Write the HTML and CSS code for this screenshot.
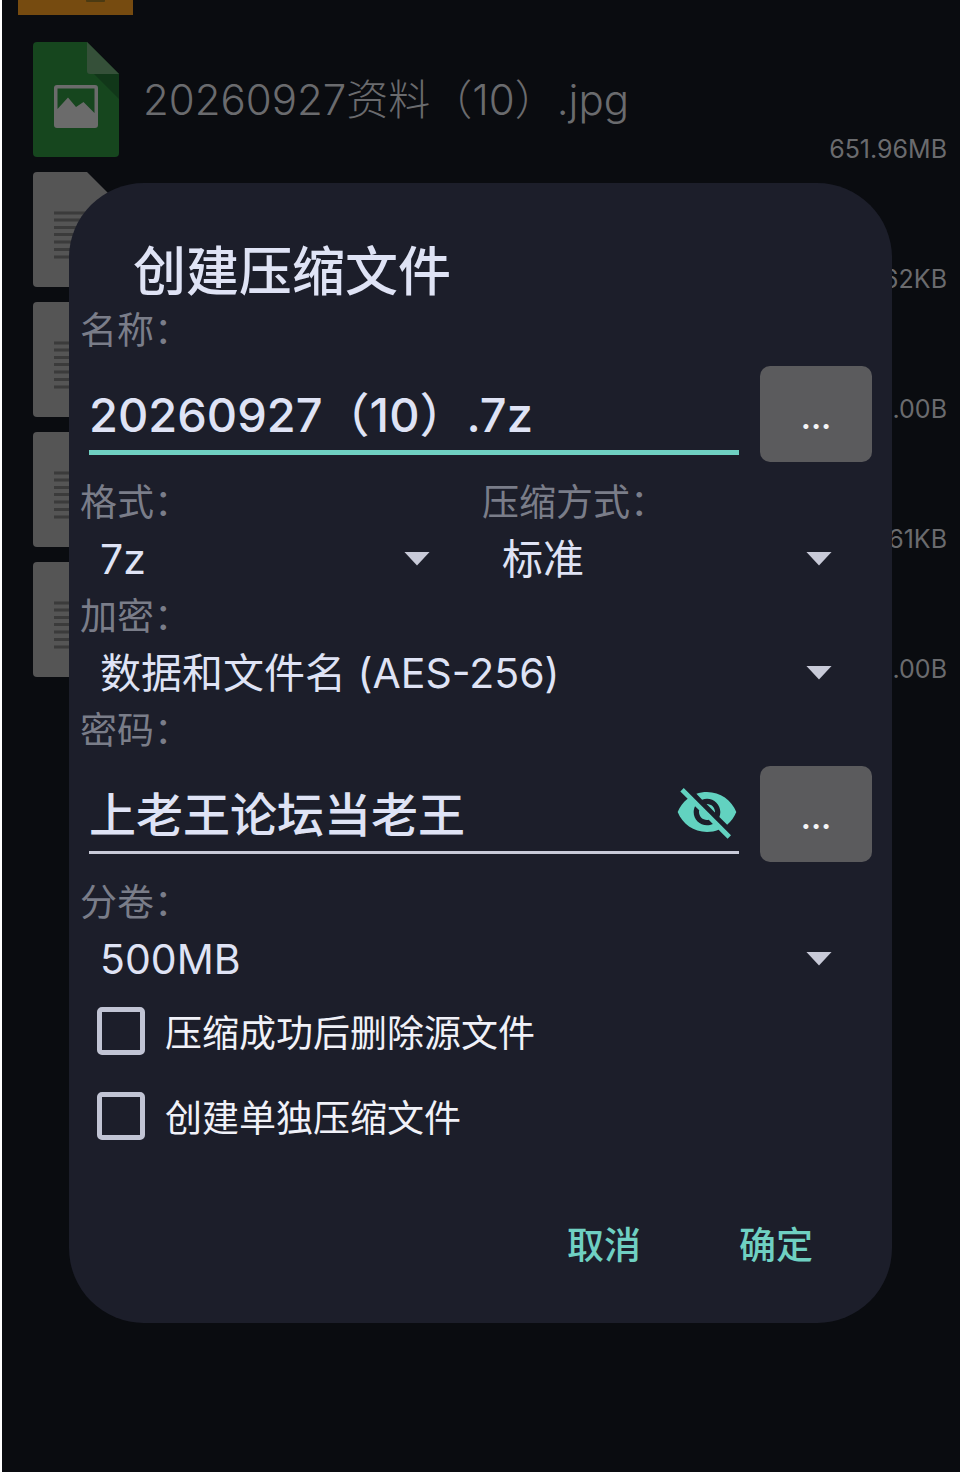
FILE: index.html
```
<!DOCTYPE html>
<html lang="zh-CN">
<head>
  <meta charset="utf-8">
  <meta name="viewport" content="width=device-width, initial-scale=1">
  <title>创建压缩文件</title>
  <link rel="stylesheet" href="styles.css">
</head>
<body>
  <!-- shared icons -->
  <svg class="sprite" width="0" height="0" aria-hidden="true">
    <symbol id="icon-doc" viewBox="0 0 86 115">
      <path fill="#555555" d="M4 0H54L86 32V111Q86 115 82 115H4Q0 115 0 111V4Q0 0 4 0Z"/>
      <path stroke="#3b3b3b" stroke-width="3" d="M21 41H65M21 48H65M21 55.500H65M21 62.500H65M21 70H65M21 77.500H65M21 85H50"/>
    </symbol>
  </svg>

  <div class="screen">
    <ul class="files">
      <li class="file file-cut">
        <svg class="folder-icon" viewBox="0 0 115 15" aria-hidden="true">
          <path fill="#764b10" d="M0 0H115V15H0Z"/>
          <path fill="#4b3a12" d="M68 0H87V1Q87 2 86 2H69Q68 2 68 1Z"/>
        </svg>
      </li>
      <li class="file">
        <svg class="file-icon" viewBox="0 0 86 115" aria-hidden="true">
          <path fill="#16461e" d="M4 0H54L86 32V111Q86 115 82 115H4Q0 115 0 111V4Q0 0 4 0Z"/>
          <path fill="#113719" d="M61 32H86V57Z"/>
          <path fill="#355039" d="M54 0L86 32H57Q54 32 54 29Z"/>
          <path fill="#6b6b6b" fill-rule="evenodd" d="M24 43H62Q65 43 65 46V83Q65 86 62 86H24Q21 86 21 83V46Q21 43 24 43ZM24.500 46.500V67L35 55.500L43 65L50.500 60L61.500 71V46.500Z"/>
        </svg>
        <span class="file-name">20260927资料（10）.jpg</span>
        <span class="file-size">651.96MB</span>
      </li>
      <li class="file">
        <svg class="file-icon" aria-hidden="true"><use href="#icon-doc"/></svg>
        <span class="file-size">62KB</span>
      </li>
      <li class="file">
        <svg class="file-icon" aria-hidden="true"><use href="#icon-doc"/></svg>
        <span class="file-size">.00B</span>
      </li>
      <li class="file">
        <svg class="file-icon" aria-hidden="true"><use href="#icon-doc"/></svg>
        <span class="file-size">61KB</span>
      </li>
      <li class="file">
        <svg class="file-icon" aria-hidden="true"><use href="#icon-doc"/></svg>
        <span class="file-size">.00B</span>
      </li>
    </ul>

    <form class="dialog" role="dialog" aria-labelledby="dialog-title">
      <h1 class="dialog-title" id="dialog-title">创建压缩文件</h1>

      <label class="label" for="name">名称：</label>
      <div class="input-row">
        <div class="input-wrap focused">
          <input class="input" type="text" id="name" value="20260927（10）.7z">
        </div>
        <button class="more" type="button" aria-label="浏览">...</button>
      </div>

      <div class="columns">
        <div class="column">
          <label class="label" for="format">格式：</label>
          <div class="select-wrap">
            <select class="select" id="format">
              <option>7z</option>
            </select>
          </div>
        </div>
        <div class="column">
          <label class="label" for="level">压缩方式：</label>
          <div class="select-wrap">
            <select class="select" id="level">
              <option>标准</option>
            </select>
          </div>
        </div>
      </div>

      <label class="label" for="encrypt">加密：</label>
      <div class="select-wrap">
        <select class="select" id="encrypt">
          <option>数据和文件名 (AES-256)</option>
        </select>
      </div>

      <label class="label" for="password">密码：</label>
      <div class="input-row">
        <div class="input-wrap">
          <input class="input" type="text" id="password" value="上老王论坛当老王">
          <button class="eye" type="button" aria-label="隐藏密码">
            <svg viewBox="0 0 24 24" aria-hidden="true">
              <path fill="currentColor" d="M12 7c2.760 0 5 2.240 5 5 0 .65-.13 1.260-.36 1.830l2.920 2.920c1.510-1.260 2.700-2.890 3.430-4.750-1.730-4.390-6-7.500-11-7.500-1.400 0-2.740.25-3.980.7l2.160 2.160C10.740 7.130 11.350 7 12 7zM2 4.270l2.280 2.280.46.46C3.080 8.300 1.780 10.020 1 12c1.730 4.390 6 7.500 11 7.500 1.550 0 3.030-.3 4.380-.84l.42.42L19.730 22 21 20.730 3.270 3 2 4.270zM7.530 9.800l1.550 1.550c-.05.21-.08.43-.08.65 0 1.660 1.340 3 3 3 .22 0 .44-.03.65-.08l1.550 1.550c-.67.33-1.410.53-2.200.53-2.760 0-5-2.240-5-5 0-.79.2-1.530.53-2.200zm4.310-.78l3.150 3.150.02-.16c0-1.660-1.340-3-3-3l-.17.010z"/>
            </svg>
          </button>
        </div>
        <button class="more" type="button" aria-label="选择密码">...</button>
      </div>

      <label class="label" for="volume">分卷：</label>
      <div class="select-wrap">
        <select class="select" id="volume">
          <option>500MB</option>
        </select>
      </div>

      <label class="check">
        <input type="checkbox" class="checkbox">
        压缩成功后删除源文件
      </label>
      <label class="check">
        <input type="checkbox" class="checkbox">
        创建单独压缩文件
      </label>

      <div class="actions">
        <button class="action" type="button">取消</button>
        <button class="action" type="submit">确定</button>
      </div>
    </form>
  </div>
</body>
</html>
```

FILE: styles.css
```
* {
  box-sizing: border-box;
}

body {
  margin: 0;
  background-color: #fff;
  font-family: Inter, "Noto Sans CJK SC", sans-serif;
}

input,
select,
button {
  font-family: inherit;
  margin: 0;
  padding: 0;
  border: none;
  background: none;
}

.sprite {
  display: block;
}

.screen {
  position: relative;
  min-height: 100vh;
  background-color: #0a0c10;
  border-left: 2px solid #fff;
  border-bottom: 2px solid #fff;
}

/* dimmed file list */
.files {
  position: absolute;
  top: 0;
  left: 0;
  right: 0;
  margin: 0;
  padding: 0;
  list-style: none;
  color: #6a6b6e;
}

.file {
  display: flex;
  height: 130px;
  padding: 8px 13px 0 31px;
}

.file-cut {
  height: 34px;
  padding: 0 16px;
}

.folder-icon {
  width: 115px;
  height: 15px;
}

.file-icon {
  flex: none;
  width: 86px;
  height: 115px;
}

.file-name {
  margin-left: 24px;
  font-size: 42px;
  font-weight: 300;
  line-height: 116px;
  white-space: nowrap;
}

.file-size {
  margin-left: auto;
  padding-top: 90px;
  font-size: 25px;
  line-height: 34px;
}

/* dialog */
.dialog {
  position: absolute;
  top: 183px;
  left: 67px;
  right: 68px;
  padding: 61px 8px 50px 11px;
  border-radius: 75px;
  background-color: #1c1e2a;
  color: #dfe3f5;
}

.dialog-title {
  margin: 0 0 0 53px;
  font-size: 53px;
  font-weight: 500;
  line-height: 57px;
}

.label {
  display: block;
  padding-top: 3px;
  color: #7a7d89;
  font-size: 37px;
  font-weight: 400;
  line-height: 54px;
}

.input-row {
  display: flex;
  gap: 21px;
  padding: 8px 12px 11px 9px;
}

.input-wrap {
  display: flex;
  flex: 1;
  min-width: 0;
  height: 88px;
  padding-top: 6px;
  border-bottom: 3px solid #c8cad8;
}

.input-wrap.focused {
  height: 89px;
  border-bottom: 5px solid #6fd0c2;
}

.input {
  flex: 1;
  min-width: 0;
  color: inherit;
  font-size: 47px;
  font-weight: 500;
  outline: none;
}

.eye {
  flex: none;
  align-self: center;
  width: 64px;
  height: 64px;
  color: #62d2c0;
}

.eye svg {
  display: block;
}

.more {
  width: 112px;
  height: 96px;
  padding-top: 6px;
  border-radius: 10px;
  background-color: #5b5b5d;
  color: #f4f4f6;
  font-size: 32px;
  font-weight: 600;
}

.columns {
  display: flex;
}

.column {
  flex: 1;
}

.select-wrap {
  display: flex;
  align-items: center;
  height: 57px;
  padding: 0 52px 0 20px;
}

.select-wrap::after {
  content: "";
  width: 26px;
  height: 14px;
  background-color: #c8cad8;
  clip-path: polygon(0 0, 100% 0, 50% 100%);
}

.select {
  flex: 1;
  min-width: 0;
  height: 57px;
  appearance: none;
  color: inherit;
  font-size: 41px;
  outline: none;
}

.check {
  display: flex;
  align-items: center;
  gap: 20px;
  height: 85px;
  padding: 3px 0 0 17px;
  color: #f0f1f8;
  font-size: 37px;
}

.checkbox {
  width: 48px;
  height: 48px;
  appearance: none;
  border: 5px solid #c1c4d4;
  border-radius: 5px;
}

.checkbox:checked {
  background-color: #62d2c0;
}

.actions {
  display: flex;
  justify-content: flex-end;
  gap: 24px;
  padding: 56px 34px 0 0;
}

.action {
  height: 60px;
  padding: 0 37px;
  color: #6fd0c2;
  font-size: 37px;
  font-weight: 500;
}
```
